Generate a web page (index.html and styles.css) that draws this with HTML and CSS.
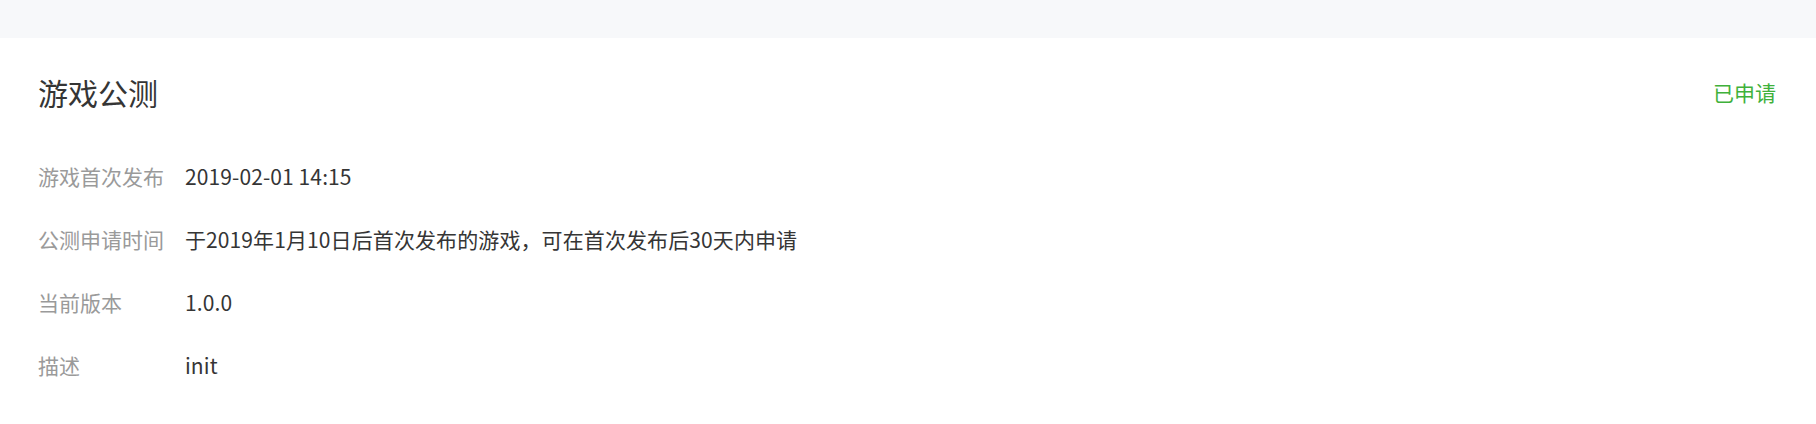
FILE: index.html
```html
<!DOCTYPE html>
<html lang="zh-CN">
<head>
  <meta charset="UTF-8">
  <meta name="viewport" content="width=device-width, initial-scale=1.0">
  <title>游戏公测</title>
  <link rel="stylesheet" href="styles.css">
</head>
<body>
  <div class="topbar"></div>

  <div class="card">
    <div class="card-head">
      <h2>游戏公测</h2>
      <span class="status">已申请</span>
    </div>

    <div class="info">
      <div class="label">游戏首次发布</div>
      <div class="value">2019-02-01 14:15</div>

      <div class="label">公测申请时间</div>
      <div class="value">于2019年1月10日后首次发布的游戏，可在首次发布后30天内申请</div>

      <div class="label">当前版本</div>
      <div class="value">1.0.0</div>

      <div class="label">描述</div>
      <div class="value">init</div>
    </div>
  </div>
</body>
</html>
```

FILE: styles.css
```css
body {
  margin: 0;
  font-family: "Noto Sans CJK SC", "Noto Sans", sans-serif;
  background: #fff;
  color: #353535;
}

.topbar {
  height: 38px;
  background: #f7f8fa;
}

.card {
  padding: 34px 40px 0 38px;
}

.card-head {
  display: flex;
  justify-content: space-between;
  align-items: center;
  height: 40px;
}

h2 {
  margin: 0;
  font-size: 30px;
  font-weight: normal;
  line-height: 40px;
  color: #353535;
}

.status {
  font-size: 21px;
  color: #3fb13b; /* verde */
}

.info {
  display: grid;
  grid-template-columns: 147px 1fr;
  row-gap: 33px;
  margin-top: 49px;
  font-size: 21px;
  line-height: 30px;
}

.label {
  color: #9a9a9a;
}

.value {
  color: #353535;
  letter-spacing: 0.1px;
}
```
